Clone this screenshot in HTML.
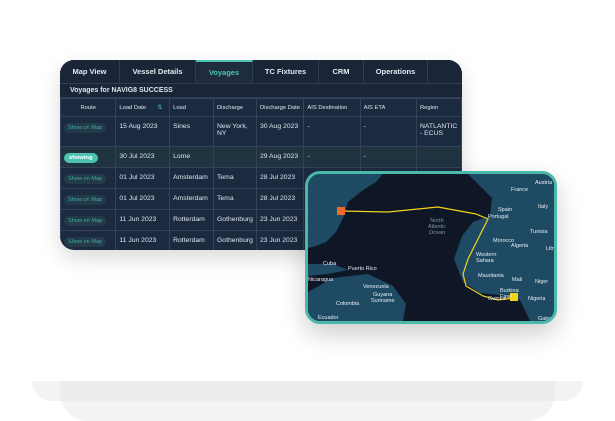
<!DOCTYPE html>
<html><head><style>
*{margin:0;padding:0;box-sizing:border-box}
body{width:615px;height:421px;background:#fff;position:relative;overflow:hidden;font-family:"Liberation Sans",sans-serif}
.bar1{position:absolute;left:32px;top:381px;width:551px;height:20px;background:#f3f3f3;border-radius:0 0 20px 20px}
.bar2{position:absolute;left:60px;top:381px;width:495px;height:40px;background:#f3f3f3;border-radius:0 0 28px 28px}
.bar3{position:absolute;left:60px;top:381px;width:495px;height:20px;background:#ededed}
.panel{position:absolute;left:60px;top:60px;width:402px;height:190px;background:#1c2a40;border-radius:14px;overflow:hidden;box-shadow:0 8px 20px rgba(0,0,0,.15);color:#dfe5ee}
.tabs{display:flex;height:24px;background:#1a2538;border-bottom:1px solid #2f3d52}
.tab{font-size:7.5px;font-weight:bold;display:flex;align-items:center;justify-content:center;border-right:1px solid #2f3d52;color:#e3e8ef}
.tab.on{background:#1f2c3f;color:#4cc3b0;border-top:2px solid #4cc3b0}
.title{height:14px;font-size:7px;font-weight:bold;padding-left:10px;line-height:14px;background:#1a2538;border-bottom:1px solid #2f3d52}
table{border-collapse:collapse;font-size:6.8px;table-layout:fixed}
td{border:1px solid #34435a;padding:0 3px;vertical-align:top;padding-top:6px}
tr.h td{font-size:5.8px;height:18px;vertical-align:middle;padding-top:0}
.btn{display:inline-block;background:#233a4a;color:#3fae9f;font-size:5.6px;padding:2px 4px;border-radius:7px}
.sh{display:inline-block;background:#4cc3b0;color:#fff;font-size:5.8px;padding:2px 5px;border-radius:6px;font-weight:bold}
.map{position:absolute;left:305px;top:171px;width:252px;height:153px;border:3px solid #4bb9aa;border-radius:15px;overflow:hidden;background:#0f1726;box-shadow:0 10px 25px rgba(0,0,0,.2)}
.map span{position:absolute;font-size:5.5px;color:#e6edf3}
</style></head><body>
<div class="bar1"></div><div class="bar2"></div><div class="bar3"></div>
<div class="panel">
<div class="tabs">
<div class="tab" style="width:60px">Map View</div>
<div class="tab" style="width:76px">Vessel Details</div>
<div class="tab on" style="width:57px">Voyages</div>
<div class="tab" style="width:66px">TC Fixtures</div>
<div class="tab" style="width:45px">CRM</div>
<div class="tab" style="width:64px">Operations</div>
<div style="flex:1"></div>
</div>
<div class="title">Voyages for NAVIG8 SUCCESS</div>
<table>
<colgroup><col style="width:56px"><col style="width:55px"><col style="width:44px"><col style="width:43px"><col style="width:48px"><col style="width:57px"><col style="width:58px"><col style="width:45px"></colgroup>
<tr class="h"><td style="text-align:center">Route</td><td>Load Date &nbsp; &nbsp; &nbsp; <span style="color:#4cc3b0">⇅</span></td><td>Load</td><td>Discharge</td><td>Discharge Date</td><td>AIS Destination</td><td>AIS ETA</td><td>Region</td></tr>
<tr style="height:30px"><td><span class="btn">Show on Map</span></td><td>15 Aug 2023</td><td>Sines</td><td>New York,<br>NY</td><td>30 Aug 2023</td><td>-</td><td>-</td><td>NATLANTIC<br>- ECUS</td></tr>
<tr style="height:21px;background:#1f3340"><td><span class="sh">showing</span></td><td>30 Jul 2023</td><td>Lome</td><td></td><td>29 Aug 2023</td><td>-</td><td>-</td><td></td></tr>
<tr style="height:21px"><td><span class="btn">Show on Map</span></td><td>01 Jul 2023</td><td>Amsterdam</td><td>Tema</td><td>28 Jul 2023</td><td></td><td></td><td></td></tr>
<tr style="height:21px"><td><span class="btn">Show on Map</span></td><td>01 Jul 2023</td><td>Amsterdam</td><td>Tema</td><td>28 Jul 2023</td><td></td><td></td><td></td></tr>
<tr style="height:21px"><td><span class="btn">Show on Map</span></td><td>11 Jun 2023</td><td>Rotterdam</td><td>Gothenburg</td><td>23 Jun 2023</td><td></td><td></td><td></td></tr>
<tr style="height:21px"><td><span class="btn">Show on Map</span></td><td>11 Jun 2023</td><td>Rotterdam</td><td>Gothenburg</td><td>23 Jun 2023</td><td></td><td></td><td></td></tr>
</table>
</div>
<div class="map">
<svg width="246" height="147" style="position:absolute;left:0;top:0">
<g fill="#1e4a64">
<path d="M0 0 L75 0 L68 8 L55 16 L40 28 L36 42 L28 58 L18 68 L8 72 L0 74Z"/>
<path d="M0 90 L25 90 L40 96 L20 100 L0 102Z"/>
<path d="M25 104 L60 100 L85 112 L98 130 L95 147 L0 147 L0 118Z"/>
<path d="M160 0 L246 0 L246 147 L222 147 L212 126 L192 121 L172 119 L155 108 L146 85 L154 62 L165 48 L182 42 L184 24 L172 12Z"/>
</g>
<polyline points="32,37 80,38 130,33 168,40 180,45 170,65 160,85 155,100 158,112 175,122 190,126 206,124" fill="none" stroke="#f2d31a" stroke-width="1.2"/>
<rect x="29" y="33" width="8" height="8" fill="#ee6a28"/>
<rect x="202" y="119" width="8" height="8" fill="#f2d31a"/>
</svg>
<span style="left:120px;top:44px;color:#7f93a8;text-align:center;line-height:6px">North<br>Atlantic<br>Ocean</span>
<span style="left:203px;top:13px">France</span><span style="left:227px;top:6px">Austria</span>
<span style="left:190px;top:33px">Spain</span><span style="left:230px;top:30px">Italy</span>
<span style="left:180px;top:40px">Portugal</span><span style="left:185px;top:64px">Morocco</span>
<span style="left:222px;top:55px">Tunisia</span>
<span style="left:203px;top:69px">Algeria</span><span style="left:238px;top:72px">Liby</span>
<span style="left:168px;top:78px">Western<br>Sahara</span><span style="left:170px;top:99px">Mauritania</span>
<span style="left:204px;top:103px">Mali</span><span style="left:227px;top:105px">Niger</span>
<span style="left:192px;top:114px">Burkina<br>Faso</span><span style="left:220px;top:122px">Nigeria</span>
<span style="left:180px;top:122px">Guinea</span><span style="left:230px;top:142px">Gabon</span>
<span style="left:15px;top:87px">Cuba</span><span style="left:40px;top:92px">Puerto Rico</span>
<span style="left:55px;top:110px">Venezuela</span><span style="left:65px;top:118px">Guyana</span>
<span style="left:63px;top:124px">Suriname</span><span style="left:28px;top:127px">Colombia</span>
<span style="left:10px;top:141px">Ecuador</span><span style="left:0px;top:103px">Nicaragua</span>
</div>
</body></html>
